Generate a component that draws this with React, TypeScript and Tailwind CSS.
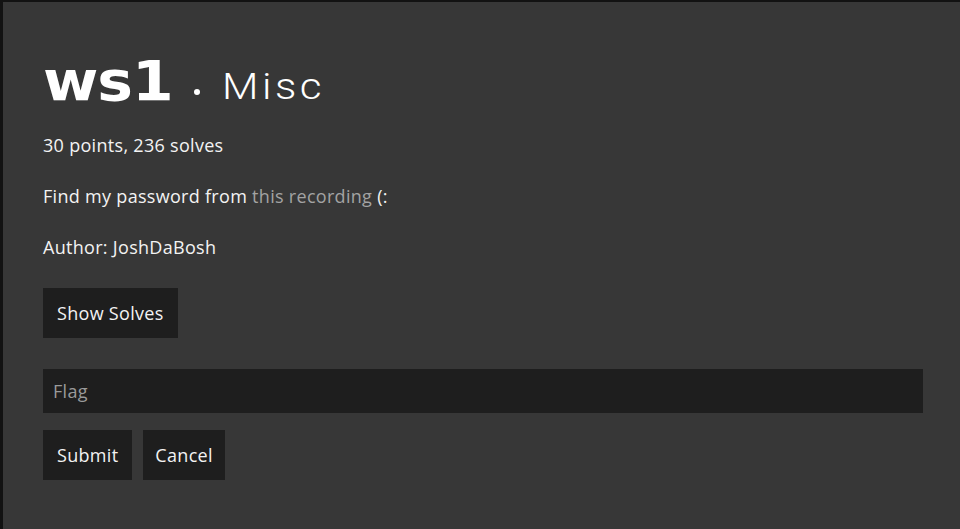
export default function App() {
  const body = { fontFamily: '"Open Sans", "Noto Sans", sans-serif' };
  return (
    <div className="w-[960px] h-[529px] bg-[#121212] pl-[3px] pt-[2px] overflow-hidden">
      <div className="h-full bg-[#373737] pl-[40px] pr-[37px] pt-[51px] text-[#f3f3f3]" style={body}>
        <h1 className="flex items-baseline h-[56px] leading-none text-white">
          <span className="inline-block origin-left scale-x-[1.07] mr-[8px] text-[56px] font-bold tracking-[-1px]" style={{ fontFamily: '"DejaVu Sans", sans-serif' }}>ws1</span>
          <span className="inline-block w-[6px] h-[6px] rounded-full bg-white ml-[22px] mr-[22px] -translate-y-[5px]" />
          <span className="inline-block origin-left scale-x-[1.17] text-[36px] font-light tracking-[3px] -translate-y-[1px]" style={{ fontFamily: 'Roboto, sans-serif' }}>Misc</span>
        </h1>
        <p className="mt-[24px] text-[18px] tracking-[0.3px] leading-[24px]">30 points, 236 solves</p>
        <p className="mt-[27px] text-[18px] tracking-[0.3px] leading-[24px]">
          Find my password from <span className="text-[#a3a3a3]">this recording</span> (:
        </p>
        <p className="mt-[27px] text-[18px] tracking-[0.3px] leading-[24px]">Author: JoshDaBosh</p>
        <button className="mt-[29px] h-[50px] px-[14px] bg-[#1e1e1e] text-[18px] tracking-[0.3px] text-[#f3f3f3]">Show Solves</button>
        <div className="mt-[31px] h-[44px] bg-[#1e1e1e] flex items-center px-[10px] text-[18px] tracking-[0.3px] text-[#9a9a9a]">Flag</div>
        <div className="mt-[17px] flex gap-[11px]">
          <button className="h-[50px] px-[14px] bg-[#1e1e1e] text-[18px] tracking-[0.3px] text-[#f3f3f3]">Submit</button>
          <button className="h-[50px] px-[12px] bg-[#1e1e1e] text-[18px] tracking-[0.3px] text-[#f3f3f3]">Cancel</button>
        </div>
      </div>
    </div>
  );
}
